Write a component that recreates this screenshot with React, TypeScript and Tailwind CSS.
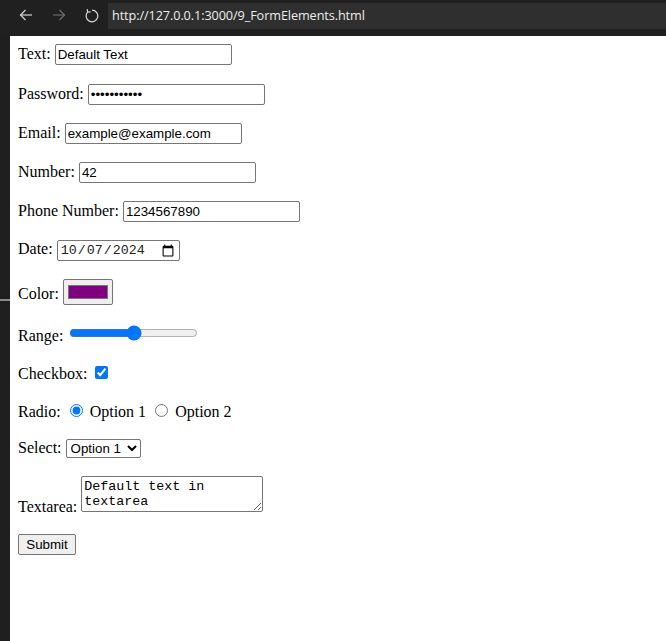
import React from 'react';

const field =
  "border border-[#767676] rounded-[2px] bg-white text-black font-['Liberation_Sans',Arial,sans-serif] text-[13.33px] leading-[normal]";

function BackIcon({ color }: { color: string }) {
  return (
    <svg width="14" height="14" viewBox="0 0 14 14" fill="none" stroke={color} strokeWidth="1.2">
      <path d="M13 7H1.5" />
      <path d="M6.5 2L1.5 7l5 5" />
    </svg>
  );
}

function ForwardIcon({ color }: { color: string }) {
  return (
    <svg width="14" height="14" viewBox="0 0 14 14" fill="none" stroke={color} strokeWidth="1.2">
      <path d="M1 7h11.5" />
      <path d="M7.5 2l5 5-5 5" />
    </svg>
  );
}

function ReloadIcon() {
  return (
    <svg width="14" height="15" viewBox="0 0 14 15" fill="none" stroke="#d8d8d8" strokeWidth="1.2">
      <path d="M7 2.2A5.8 5.8 0 1 1 2.6 4.2" />
      <path d="M2.2 1.2l.4 3 3-.3" />
    </svg>
  );
}

function BrowserBar() {
  return (
    <div className="h-[36px] shrink-0 bg-[#202020] flex items-start">
      <div className="w-[108px] h-[30px] flex items-center">
        <div className="ml-[19px]">
          <BackIcon color="#d4d4d4" />
        </div>
        <div className="ml-[19px]">
          <ForwardIcon color="#6c6c6c" />
        </div>
        <div className="ml-[19px]">
          <ReloadIcon />
        </div>
      </div>
      <div className="flex-1 mt-[3px] h-[26px] bg-[#2f2f2f] flex items-center pl-[4px]">
        <span className="font-['Open_Sans',sans-serif] text-[12.7px] text-[#ececec] tracking-[-0.1px]">
          http://127.0.0.1:3000/9_FormElements.html
        </span>
      </div>
    </div>
  );
}

export default function App() {
  return (
    <div className="w-[666px] h-[641px] flex flex-col overflow-hidden bg-white">
      <BrowserBar />
      <div className="flex flex-1">
        <div className="w-[10px] bg-[#1f1f1f] shrink-0">
          <div className="mt-[263px] h-[2px] bg-[#8a8a8a]" />
        </div>
        <div className="flex-1 p-[8px] font-['Liberation_Serif','Times_New_Roman',serif] text-[16px] leading-[normal] text-black">
          <form onSubmit={(e) => e.preventDefault()}>
            <label htmlFor="text">Text:</label>{' '}
            <input id="text" type="text" defaultValue="Default Text" className={`${field} w-[177px] h-[21px] px-[2px] py-[1px]`} />
            <br />
            <div className="h-[19px]" />
            <label htmlFor="password">Password:</label>{' '}
            <input id="password" type="password" defaultValue="password123" className={`${field} w-[177px] h-[21px] px-[2px] py-[1px]`} />
            <br />
            <br />
            <label htmlFor="email">Email:</label>{' '}
            <input id="email" type="email" defaultValue="example@example.com" className={`${field} w-[177px] h-[21px] px-[2px] py-[1px]`} />
            <br />
            <br />
            <label htmlFor="number">Number:</label>{' '}
            <input id="number" type="number" defaultValue={42} className={`${field} w-[177px] h-[21px] px-[2px] py-[1px]`} />
            <br />
            <br />
            <label htmlFor="tel">Phone Number:</label>{' '}
            <input id="tel" type="tel" defaultValue="1234567890" className={`${field} w-[177px] h-[21px] px-[2px] py-[1px]`} />
            <br />
            <br />
            <label htmlFor="date">Date:</label>{' '}
            <input
              id="date"
              type="date"
              defaultValue="2024-10-07"
              className="border border-[#767676] rounded-[2px] bg-white text-[#222] font-['Liberation_Mono','Courier_New',monospace] text-[13.33px] leading-[normal] w-[123px] h-[21px] px-[2px] py-[1px]"
            />
            <br />
            <br />
            <label htmlFor="color">Color:</label>{' '}
            <input
              id="color"
              type="color"
              defaultValue="#800080"
              className="w-[50px] h-[26px] border border-[#767676] rounded-[2px] bg-[#efefef] px-[2px] py-[1px] align-baseline"
            />
            <br />
            <br />
            <label htmlFor="range">Range:</label>{' '}
            <input id="range" type="range" defaultValue={50} className="m-[2px] w-[129px] h-[16px] accent-[#0075ff]" />
            <br />
            <br />
            <label htmlFor="checkbox">Checkbox:</label>{' '}
            <input id="checkbox" type="checkbox" defaultChecked className="mt-[3px] mr-[3px] mb-[3px] ml-[4px] w-[13px] h-[13px] accent-[#0075ff]" />
            <br />
            <br />
            <label>Radio:</label>{' '}
            <input id="opt1" type="radio" name="radio" defaultChecked className="mt-[3px] mr-[3px] ml-[5px] w-[13px] h-[13px] accent-[#0075ff]" />{' '}
            <label htmlFor="opt1">Option 1</label>{' '}
            <input id="opt2" type="radio" name="radio" className="mt-[3px] mr-[3px] ml-[5px] w-[13px] h-[13px]" />{' '}
            <label htmlFor="opt2">Option 2</label>
            <br />
            <br />
            <label htmlFor="select">Select:</label>{' '}
            <select id="select" defaultValue="1" className={`${field} h-[19px] w-[75px]`}>
              <option value="1">Option 1</option>
              <option value="2">Option 2</option>
            </select>
            <br />
            <br />
            <label htmlFor="textarea">Textarea:</label>{' '}
            <textarea
              id="textarea"
              defaultValue="Default text in textarea"
              className="w-[182px] h-[36px] border border-[#767676] rounded-[2px] bg-white p-[2px] font-['Liberation_Mono','Courier_New',monospace] text-[13.33px] leading-[normal] text-black"
            />
            <br />
            <br />
            <button
              type="submit"
              className="w-[58px] h-[21px] border border-[#767676] rounded-[2px] bg-[#efefef] px-[6px] py-[1px] font-['Liberation_Sans',Arial,sans-serif] text-[13.33px] leading-[normal] text-black"
            >
              Submit
            </button>
          </form>
        </div>
      </div>
    </div>
  );
}
